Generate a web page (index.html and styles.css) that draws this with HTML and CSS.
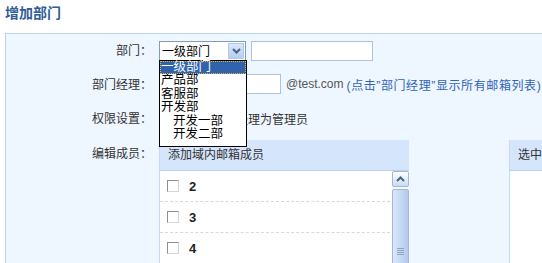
FILE: index.html
```html
<!DOCTYPE html>
<html>
<head>
    <meta charset="utf-8">
    <title>增加部门</title>
    <link rel="stylesheet" href="styles.css">
</head>
<body>
    <h1 class="title">增加部门</h1>

    <div class="panel">
        <div class="form">
            <!-- 部门 -->
            <label class="label">部门：</label>
            <div class="field">
                <div class="select">
                    <span class="select-text">一级部门</span>
                    <span class="select-btn">
                        <svg width="9" height="6" viewBox="0 0 9 6"><path d="M1 1 L4.5 4.5 L8 1" fill="none" stroke="#4d6185" stroke-width="2"/></svg>
                    </span>
                </div>
                <input class="text wide" type="text">
                <ul class="dropdown">
                    <li class="active">一级部门</li>
                    <li>产品部</li>
                    <li>客服部</li>
                    <li>开发部</li>
                    <li class="sub">开发一部</li>
                    <li class="sub">开发二部</li>
                </ul>
            </div>

            <!-- 部门经理 -->
            <label class="label">部门经理：</label>
            <div class="field">
                <input class="text short" type="text">
                <span class="domain">@test.com</span>
                <span class="hint">(点击”部门经理”显示所有邮箱列表)</span>
            </div>

            <!-- 权限设置 -->
            <label class="label">权限设置：</label>
            <div class="field">
                <span class="check"></span>
                <span>设置该部门经理为管理员</span>
            </div>

            <!-- 编辑成员 -->
            <label class="label top">编辑成员：</label>
            <div class="members">
                <div class="box left-box">
                    <div class="box-head">添加域内邮箱成员</div>
                    <div class="box-body">
                        <ul class="list">
                            <li><span class="check"></span><b>2</b></li>
                            <li><span class="check"></span><b>3</b></li>
                            <li><span class="check"></span><b>4</b></li>
                        </ul>
                        <div class="scrollbar">
                            <div class="sb-up">
                                <svg width="9" height="6" viewBox="0 0 9 6"><path d="M1 5 L4.5 1.5 L8 5" fill="none" stroke="#4d6185" stroke-width="2"/></svg>
                            </div>
                            <div class="sb-thumb">
                                <span class="grip"></span>
                            </div>
                        </div>
                    </div>
                </div>
                <div class="box right-box">
                    <div class="box-head">选中成员</div>
                    <div class="box-body"></div>
                </div>
            </div>
        </div>
    </div>
</body>
</html>
```

FILE: styles.css
```css
body {
    margin: 0;
    font-family: "Liberation Sans", "Noto Sans CJK SC", sans-serif;
    font-size: 12px;
    color: #333;
    background: #fff;
    overflow: hidden;
}
ul {
    list-style: none;
    margin: 0;
    padding: 0;
}
.title {
    margin: 0;
    padding: 4px 5px 0;
    height: 29px;
    font-size: 14px;
    line-height: 18px;
    font-weight: bold;
    color: #2f5d98;
}
.panel {
    margin-left: 5px;
    height: 230px;
    background: #eef6ff;
    border-top: 1px solid #bcd3ec;
    border-left: 1px solid #bcd3ec;
    padding-top: 6px;
}
.form {
    display: grid;
    grid-template-columns: 146px 1fr;
    column-gap: 7px;
    row-gap: 14px;
    grid-template-rows: 20px 20px 20px auto;
}
.label {
    text-align: right;
    line-height: 20px;
    color: #333;
    font-family: "Noto Sans CJK SC", sans-serif;
}
.label.top {
    padding-top: 3px;
    margin-top: -2px;
}
.field {
    position: relative;
    display: flex;
    align-items: center;
    white-space: nowrap;
}
.select {
    box-sizing: border-box;
    width: 87px;
    height: 20px;
    margin-top: 1px;
    border: 1px solid #7f9db9;
    background: #fff;
    display: flex;
    align-items: center;
    justify-content: space-between;
}
.select-text {
    padding-left: 2px;
    color: #000;
}
.select-btn {
    width: 16px;
    height: 16px;
    margin-right: 1px;
    box-sizing: border-box;
    border: 1px solid #b4c8e6;
    background: linear-gradient(#d8e6fb, #b6cdf1);
    display: flex;
    align-items: center;
    justify-content: center;
}
.text {
    box-sizing: border-box;
    height: 20px;
    border: 1px solid #aec3d9;
    background: #fff;
    padding: 0 3px;
    margin: 0;
}
.text.wide {
    width: 122px;
    margin-left: 5px;
    margin-top: 1px;
}
.text.short {
    width: 122px;
}
.domain {
    margin-left: 5px;
    color: #555;
}
.hint {
    margin-left: 3px;
    color: #2f64b8;
    letter-spacing: 0.6px;
}
.dropdown {
    position: absolute;
    left: 0;
    top: 20px;
    z-index: 10;
    box-sizing: border-box;
    width: 88px;
    height: 87px;
    border: 1px solid #000;
    background: #fff;
    color: #000;
    line-height: 13px;
    font-size: 12.5px;
}
.dropdown li {
    height: 13.5px;
    padding-left: 1px;
}
.dropdown li.active {
    height: 13px;
    background: #3163ad;
    color: #fff;
    outline: 1px dotted #e5b93a;
    outline-offset: -1px;
}
.dropdown li.sub {
    padding-left: 13px;
}
.check {
    display: inline-block;
    box-sizing: border-box;
    width: 12px;
    height: 12px;
    border: 1px solid #8f8f8f;
    border-right-color: #d4d4d4;
    border-bottom-color: #d4d4d4;
    background: #fff;
    margin-right: 5px;
}
.members {
    display: flex;
    gap: 100px;
    margin-top: -2px;
}
.box {
    box-sizing: border-box;
    height: 140px;
    border-left: 1px solid #c6d9f1;
}
.left-box {
    width: 250px;
}
.right-box {
    width: 120px;
}
.box-head {
    height: 30px;
    line-height: 30px;
    padding-left: 8px;
    background: #d5e5fb;
    border-bottom: 1px solid #b9d1ea;
    color: #333;
    font-size: 12px;
}
.box-body {
    display: flex;
    height: 100%;
    background: #fff;
}
.list {
    flex: 1;
    padding-right: 2px;
}
.list li {
    height: 30px;
    border-bottom: 1px dashed #d9d9d9;
    display: flex;
    align-items: center;
    padding-left: 7px;
}
.list li:last-child {
    border-bottom: none;
}
.list .check {
    margin-right: 10px;
}
.list b {
    font-size: 13px;
    color: #222;
}
.scrollbar {
    width: 17px;
    background: #f4f7fc;
    display: flex;
    flex-direction: column;
    gap: 2px;
}
.sb-up {
    box-sizing: border-box;
    height: 16px;
    border: 1px solid #a5b7d3;
    border-radius: 2px;
    background: linear-gradient(#ffffff, #c9daf3);
    display: flex;
    align-items: center;
    justify-content: center;
}
.sb-thumb {
    flex: 1;
    box-sizing: border-box;
    border: 1px solid #a5b7d3;
    border-radius: 2px;
    background: linear-gradient(90deg, #dae7fa, #c2d6f4 60%, #b3c9ec);
    position: relative;
}
.grip {
    position: absolute;
    left: 4px;
    top: 58px;
    width: 7px;
    height: 7px;
    background: repeating-linear-gradient(#8fa4c4 0, #8fa4c4 1px, transparent 1px, transparent 2px);
}
```
